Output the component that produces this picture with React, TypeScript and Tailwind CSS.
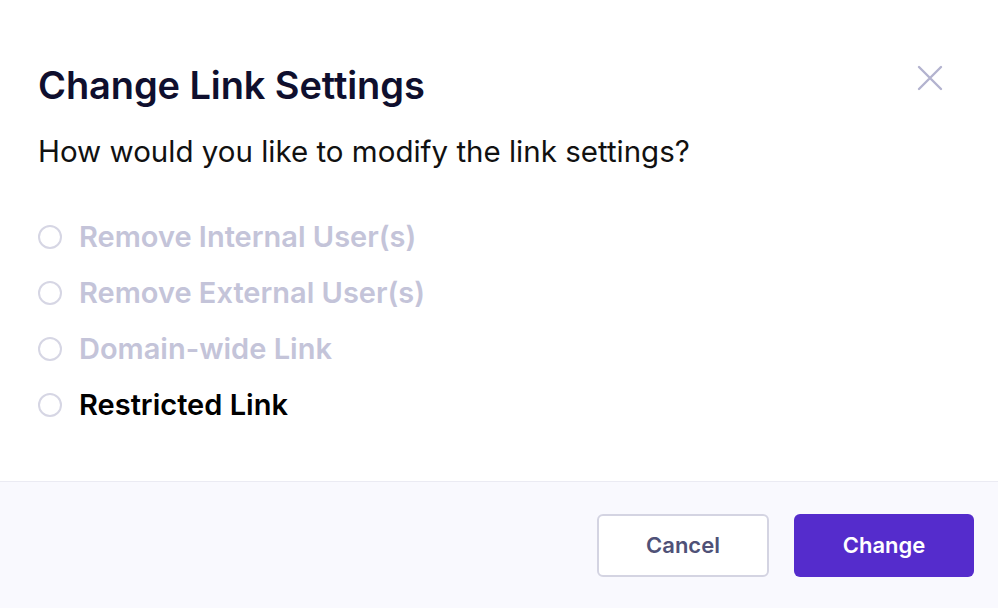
const options = [
  { label: "Remove Internal User(s)", disabled: true },
  { label: "Remove External User(s)", disabled: true },
  { label: "Domain-wide Link", disabled: true },
  { label: "Restricted Link", disabled: false },
];

export default function App() {
  return (
    <div
      className="flex h-[608px] w-[998px] flex-col bg-white"
      style={{ fontFamily: "Inter, 'Liberation Sans', sans-serif" }}
    >
      <div className="relative flex-1 pl-[38px] pt-[63px]">
        <button className="absolute right-[55px] top-[65px] text-[#b3b3cf]">
          <svg width="26" height="26" viewBox="0 0 26 26" fill="none" stroke="currentColor" strokeWidth="2.4" strokeLinecap="round">
            <path d="M2 2L24 24M24 2L2 24" />
          </svg>
        </button>
        <h1 className="text-[38px] font-semibold leading-[44px] tracking-[-0.1px] text-[#0f0f2e]">
          Change Link Settings
        </h1>
        <p className="mt-[26px] text-[29.5px] leading-[36px] text-[#111]">
          How would you like to modify the link settings?
        </p>
        <div className="mt-[52px] flex flex-col gap-[24px]">
          {options.map((o) => (
            <label key={o.label} className="flex h-[32px] items-center gap-[17px]">
              <span className="h-[24px] w-[24px] rounded-full border-2 border-[#d6d6e4] bg-white" />
              <span
                className={
                  "text-[29px] font-semibold leading-[32px] " +
                  (o.disabled ? "text-[#c4c4d9]" : "text-black")
                }
              >
                {o.label}
              </span>
            </label>
          ))}
        </div>
      </div>
      <div className="flex h-[127px] items-center justify-end gap-[25px] border-t border-[#ebebf3] bg-[#f9f9fe] pr-[24px]">
        <button className="h-[63px] w-[172px] rounded-[6px] border-2 border-[#d4d4e2] bg-white text-[22px] font-semibold text-[#4f5177]">
          Cancel
        </button>
        <button className="h-[63px] w-[180px] rounded-[6px] bg-[#552ccc] text-[22px] font-semibold text-white">
          Change
        </button>
      </div>
    </div>
  );
}
